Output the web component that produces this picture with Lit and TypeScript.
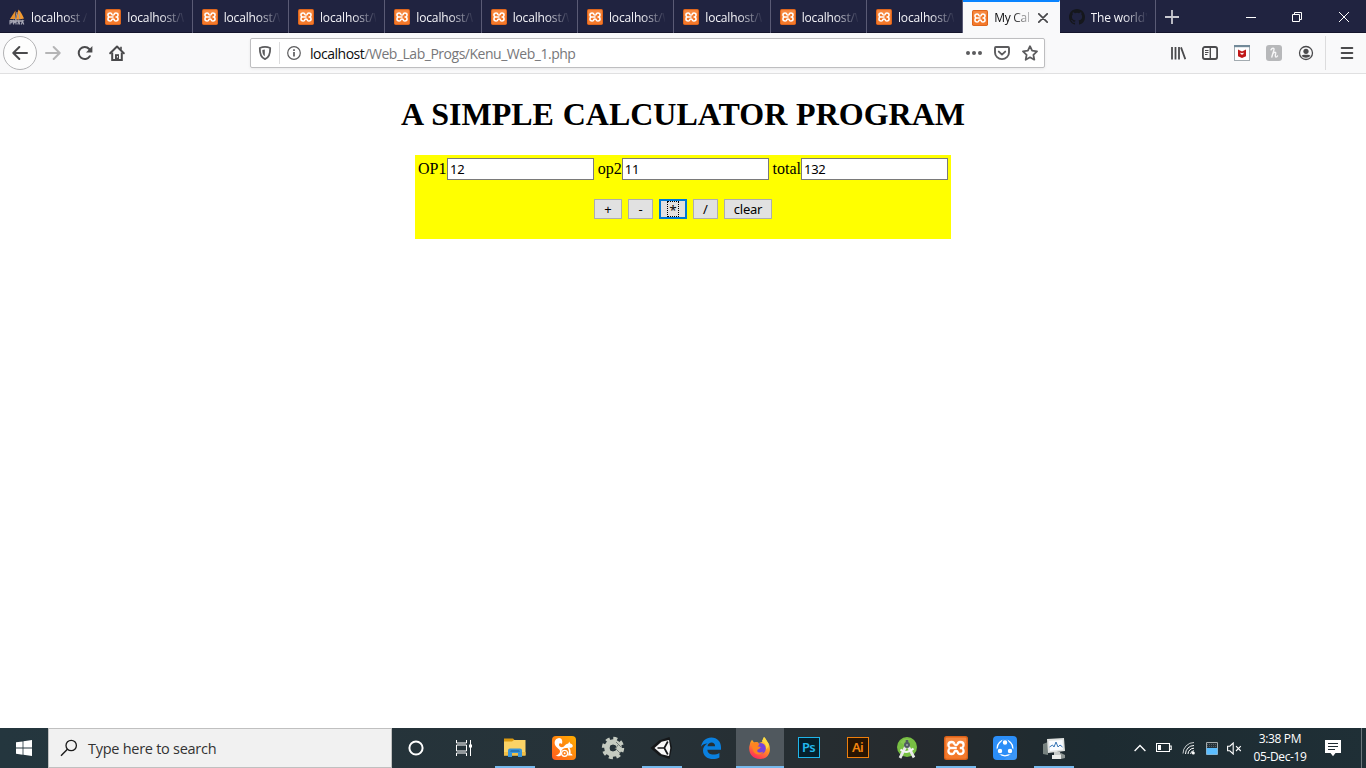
import { LitElement, html, css, svg, nothing } from "lit";
import { customElement, property, state } from "lit/decorators.js";
import { classMap } from "lit/directives/class-map.js";

const xampp = (s: number) => html`<svg width=${s} height=${s} viewBox="0 0 24 24">
  <rect width="24" height="24" rx="2.5" fill="#d9611a"/><rect x="1.2" y="1.2" width="21.6" height="21.6" rx="1.8" fill="#f4792b"/>
  <path d="M2 2h20v5C15 9 8 8 2 11z" fill="#f99a58" opacity=".5"/>
  <path d="M6.200 12H12.800M17.800 12H15.800M7.800 6Q4.400 6 4.400 9Q4.400 11 6.200 12Q4.400 13 4.400 15Q4.400 18 7.800 18Q9.800 18 10.200 16.200Q10.500 15 12 15Q13.500 15 13.800 16.200Q14.200 18 16.200 18Q19.600 18 19.600 15Q19.600 13 17.800 12Q19.600 11 19.600 9Q19.600 6 16.200 6Q14.200 6 13.800 7.800Q13.500 9 12 9Q10.500 9 10.200 7.800Q9.800 6 7.800 6z" fill="none" stroke="#fff" stroke-width="2.300" stroke-linejoin="round"/>
</svg>`;

const ic = (w: number, h: number, body: unknown) =>
  html`<svg width=${w} height=${h} viewBox="0 0 ${w} ${h}" fill="none">${body}</svg>`;

const icons = {
  pma: ic(16, 16, svg`<path d="M1 10L6.5 1.5L6.2 10z" fill="#e8922d"/><path d="M6.8 10.5L9.5 0.5C12 3 14 7 15 9.5L10 10.5z" fill="#f39a30"/><path d="M8 3L6.3 11M10 5l1 5" stroke="#9c9baa"/><path d="M.5 11h15l-1.5 2H2z" fill="#8d8d9b"/><path d="M1 15.5v-3.7h2v2H1M4.6 15.5v-3.7l1.2 1.7L7 11.8v3.7M8.8 15.5l1-3.5 1 3.5M12.4 15.5l1-3.5 1.4 3.5" stroke="#a9a9b7" stroke-width="1.1"/>`),
  github: ic(16, 16, svg`<path fill="#15171c" d="M8 0C3.58 0 0 3.58 0 8c0 3.54 2.29 6.53 5.47 7.59.4.07.55-.17.55-.38v-1.49c-2.01.37-2.53-.49-2.69-.94-.09-.23-.48-.94-.82-1.13-.28-.15-.68-.52-.01-.53.63-.01 1.08.58 1.23.82.72 1.21 1.87.87 2.33.66.07-.52.28-.87.51-1.07-1.78-.2-3.64-.89-3.64-3.95 0-.87.31-1.59.82-2.15-.08-.2-.36-1.02.08-2.12 0 0 .67-.21 2.2.82a7.4 7.4 0 0 1 4 0c1.53-1.04 2.2-.82 2.2-.82.44 1.1.16 1.92.08 2.12.51.56.82 1.27.82 2.15 0 3.07-1.87 3.75-3.65 3.95.29.25.54.73.54 1.48v2.2c0 .21.15.46.55.38A8 8 0 0 0 16 8c0-4.42-3.58-8-8-8z"/>`),
  back: ic(16, 16, svg`<path d="M15 8H1.8M7.3 2L1.3 8l6 6" stroke="#4a4a4c" stroke-width="2" stroke-linecap="round" stroke-linejoin="round"/>`),
  forward: ic(16, 16, svg`<path d="M1 8h13.2M8.7 2l6 6-6 6" stroke="#b5b5b6" stroke-width="2" stroke-linecap="round" stroke-linejoin="round"/>`),
  reload: ic(16, 16, svg`<path d="M12.8 11.2A6 6 0 1 1 12.2 4" stroke="#4a4a4c" stroke-width="2" stroke-linecap="round"/><path d="M15.4 1v6.5H9z" fill="#4a4a4c"/>`),
  home: ic(16, 16, svg`<path d="M1.2 8.2L8 1.5l6.8 6.7" stroke="#4a4a4c" stroke-width="2" stroke-linecap="round" stroke-linejoin="round"/><path d="M3.2 7.5V14.9h9.6V7.5" stroke="#4a4a4c" stroke-width="2"/><path d="M12 1.8v3" stroke="#4a4a4c" stroke-width="1.6"/><path d="M6 15V9.2h4V15z" fill="#4a4a4c"/><path d="M8.4 11v1.6" stroke="#f9f9fa"/>`),
  shield: ic(16, 16, svg`<path d="M8 1.9c2.2 0 3.8.5 5.2 1.1.1 5-.6 9.4-5.2 11.2C3.400 12.400 2.700 8 2.800 3 4.200 2.400 5.800 1.900 8 1.900z" stroke="#5c5c5e" stroke-width="1.8" stroke-linejoin="round"/><path d="M7.800 4.600v6.700C5.800 10 5.300 7.600 5.300 5z" fill="#5c5c5e"/>`),
  info: ic(16, 16, svg`<circle cx="8" cy="8" r="6.3" stroke="#5c5c5e" stroke-width="1.200"/><path d="M8 7v4.500M8 4.300v1.600" stroke="#5c5c5e" stroke-width="1.700"/>`),
  dots: ic(16, 16, svg`<g fill="#5c5c5e"><circle cx="2" cy="8" r="2"/><circle cx="8" cy="8" r="2"/><circle cx="14" cy="8" r="2"/></g>`),
  pocket: ic(16, 16, svg`<path d="M1.900 2h12.200q.9 0 .9.900V7.500a7 6.600 0 0 1-14 0V2.900Q1 2 1.900 2z" stroke="#5c5c5e" stroke-width="1.900"/><path d="M4.800 6.600L8 9.600l3.200-3" stroke="#5c5c5e" stroke-width="1.900" stroke-linecap="round" stroke-linejoin="round"/>`),
  star: ic(16, 16, svg`<path d="M8 1.200l2.100 4.500 4.900.700-3.600 3.400.9 4.900L8 12.300l-4.300 2.400.9-4.900L1 6.400l4.900-.7z" stroke="#5c5c5e" stroke-width="1.800" stroke-linejoin="round"/>`),
  library: ic(16, 16, svg`<path d="M2 2v12.500M5.500 2v12.500M9 2v12.500M11 2.400L15.300 14.300" stroke="#4a4a4c" stroke-width="1.800"/>`),
  sidebar: ic(16, 16, svg`<rect x=".9" y="2" width="14.200" height="12" rx="2" stroke="#4a4a4c" stroke-width="1.800"/><path d="M8.300 2v12" stroke="#4a4a4c" stroke-width="1.400"/><path d="M3 5.500h3.500M3 7.500h3.500M3 9.500h2.500" stroke="#4a4a4c"/>`),
  mcafee: ic(16, 16, svg`<rect x=".5" y=".5" width="15" height="15" fill="#fff" stroke="#a3abb0"/><path d="M0 0h16v2.200H0z" fill="#728a99"/><path d="M4 4.500L8 6.500l4-2v6.800L8 13l-4-1.700z" fill="#c01818"/><path d="M6.500 7.400L8 8.200l1.500-.8v1.600L8 9.800l-1.500-.8z" fill="#fff"/>`),
  honey: ic(16, 16, svg`<rect width="16" height="16" rx="3" fill="#b7b8ba"/><path d="M5 4.800C6 3 8.300 2.600 8 4.600L5.800 12M6.900 8.600c1.200-1.800 3.100-1.800 2.800-.2-.4 1.600-.7 3.700.3 3.700.6 0 1.200-.5 1.500-1.100" stroke="#f6f6f7" stroke-width="1.400" stroke-linecap="round"/>`),
  account: ic(16, 16, svg`<circle cx="8" cy="8" r="6.500" stroke="#4a4a4c" stroke-width="1.300"/><circle cx="8" cy="6.300" r="2.600" fill="#4a4a4c"/><path d="M3.600 10.800C5 9.300 6.500 9.700 8 9.700s3-.4 4.400 1.100C10.800 13.400 5.200 13.400 3.600 10.800z" fill="#4a4a4c"/>`),
  menu: ic(16, 16, svg`<path d="M2.700 3h10.600M2.700 8h10.600M2.700 13h10.600" stroke="#4a4a4c" stroke-width="2" stroke-linecap="round"/>`),
  plus: ic(14, 14, svg`<path d="M7 0v14M0 7h14" stroke="#c9c9d1" stroke-width="1.800"/>`),
  tabClose: ic(10, 10, svg`<path d="M.8.8l8.400 8.400M9.200.8L.8 9.200" stroke="#47474a" stroke-width="1.700" stroke-linecap="round"/>`),
  min: ic(10, 10, svg`<path d="M0 5.500h10" stroke="#fff"/>`),
  restore: ic(10, 10, svg`<path d="M.5 2.500h7v7h-7zM2.500 2.500v-2h7v7h-2" stroke="#fff"/>`),
  close: ic(10, 10, svg`<path d="M0 0l10 10M10 0L0 10" stroke="#fff"/>`),
  windows: ic(16, 16, svg`<path fill="#fff" d="M0 2.300L6.600 1.400v6.200H0zM7.400 1.300L16 .1v7.500H7.400zM0 8.400h6.600v6.300L0 13.800zM7.400 8.400H16V16l-8.600-1.200z"/>`),
  search: ic(18, 18, svg`<circle cx="11.200" cy="6.500" r="5.200" stroke="#1a1a1a" stroke-width="1.300"/><path d="M7.400 10.300L1 16.700" stroke="#1a1a1a" stroke-width="1.400"/>`),
  cortana: ic(18, 18, svg`<circle cx="9" cy="9" r="6.600" stroke="#fff" stroke-width="2"/>`),
  taskview: ic(18, 18, svg`<path d="M1.500 1v3h10V1M1.500 17v-3h10v3M1.500 6h10v6h-10zM15.500 1v16" stroke="#fff"/><path d="M14 5.500h3v3h-3z" fill="#fff"/>`),
  explorer: ic(24, 24, svg`<path d="M1 2.500h9l1.500 1.500H22v4H1z" fill="#dc9a10"/><path d="M1 5.500h8l2-1.500h11.500v15.500H1z" fill="#fbd366"/><path d="M1 16h21.500v3.500H1z" fill="#f3bf45"/><path d="M5 21v-6.500q0-2 2-2h10q2 0 2 2V21h-4v-4H9v4z" fill="#3a94d8"/><path d="M8 14h8l1 2H7z" fill="#2776b8"/>`),
  uc: ic(24, 24, svg`<defs><linearGradient id="u" x1="0" y1="1" x2="1" y2="0"><stop stop-color="#ff5a1f"/><stop offset="1" stop-color="#ffb000"/></linearGradient></defs><rect width="24" height="24" rx="4" fill="url(#u)"/><path d="M7 2C2.500 2.500 1.500 7.500 4 10.500c2 2.500 4.500 3 4 5.500-.5 2-2.500 3-4.500 3.800 2.300.8 4.700.5 6-.8l-.3-3c.3-2.500 2.500-4 4.800-4l5-.200c2-.5 2.500-2.500.5-3.800l-1.500-.8-.7-1.700-1 2c-2.500.300-3.300 2-4.700 3.200C9.500 12 7 10.500 7 8.700c0-1.500 1.800-1.800 3-.7C10.800 5 10 2 7 2z" fill="#fff"/><path d="M15.500 11.500l1.500 3.500-1 4.500h4.500c0-1.300-1-1.700-2-1.700.5-2 0-4.300-1.200-6z" fill="#fff"/><circle cx="12.600" cy="17.300" r="3" stroke="#fff" stroke-width="1.200"/><circle cx="12.600" cy="17.300" r="1" fill="#fff"/>`),
  gear: ic(24, 24, svg`<circle cx="12" cy="12" r="6" stroke="#c5cbc1" stroke-width="5.600"/><circle cx="12" cy="12" r="9.500" stroke="#c5cbc1" stroke-width="3.400" stroke-dasharray="4 3.460"/><circle cx="12" cy="12" r="3.200" fill="#263239"/><path d="M15 6l5 5M15 13l4 4M17 9l-3 4" stroke="#737b78"/>`),
  unity: ic(24, 24, svg`<path d="M.5 12L9 4.500 19.500 1 22 11.500 19.500 23 9 19.500z" fill="#151719"/><path d="M4.500 12L11.500 5.800 19 4l1.300 8-1.300 8-7.500-1.800z" fill="#f8f8f8"/><path d="M7.500 12h7M14.300 12l3.500-6.500M14.300 12l3.500 6.500" stroke="#151719" stroke-width="1.700"/>`),
  edge: ic(24, 24, svg`<path d="M2 10.800C3 5 7 1.500 12.300 1.500c6.200 0 9.700 4.500 9.700 9.700v2.500H8.400c.2 5.600 7.600 5.700 12 3.200v4.500C14.500 25 4 23 4 14.500c0-3 1.700-5.600 4.600-7C5.700 7.600 3.500 8.500 2 10.800zM8.500 10.200h7.600c0-5-6.900-4.800-7.600 0z" fill="#0a80df"/>`),
  firefox: ic(24, 24, svg`<defs><linearGradient id="f" x1=".8" y1="0" x2=".3" y2="1"><stop stop-color="#fff15a"/><stop offset=".45" stop-color="#ff9a20"/><stop offset="1" stop-color="#ff255f"/></linearGradient></defs><path d="M2.500 6L4 3.700l2 2.800 2.800-.6L11 7l3-1L16 1c2 1.500 2.500 3.500 3 5l1.400 1c3.500 7 1 15.900-8.200 16C3.500 23 .5 16.200 1.300 10.500z" fill="url(#f)"/><circle cx="12.200" cy="12.500" r="5.600" fill="#7444dc"/><path d="M3 7.500L8.500 6l3 2.400-2 2c2 .1 3 0 3.200 1.200-1 1.500-3.600 1.800-3.500 3.300.5 2 4 2 6.300.700-2.300 4.600-8 3.400-10 0z" fill="#ff8420"/><path d="M14 5c3 1 5 4.500 4 8.500l2.500-3C21 6 18 4 16 1z" fill="#ffdb40"/>`),
  android: ic(24, 24, svg`<circle cx="12" cy="11" r="10" fill="#78bf43"/><path d="M5 6l4-3h6L10 10z" fill="#91cd5f" opacity=".6"/><path d="M11 10L5 22M13 10L19 21.500" stroke="#e8e9e9" stroke-width="2.800"/><path d="M5.500 13.500q5.500 5.500 13-1" stroke="#f5f5f5" stroke-width="2"/><path d="M12 4v4" stroke="#505c62" stroke-width="2.600"/><circle cx="12" cy="9" r="3" fill="#505c62"/><circle cx="12" cy="9" r="1.100" fill="#9ca4a7"/>`),
  shareit: ic(24, 24, svg`<rect width="24" height="24" rx="4" fill="#2b8ef8"/><path d="M24 10v11q0 3-3 3H11z" fill="#55a5fa" opacity=".4"/><circle cx="12" cy="12" r="7.800" stroke="#fff" stroke-width="1.300"/><g fill="#fff" stroke="#2b8ef8" stroke-width="1.300"><circle cx="12" cy="6.500" r="2.900"/><circle cx="7" cy="15" r="2.900"/><circle cx="17" cy="15" r="2.900"/></g>`),
  monitor: ic(24, 24, svg`<path d="M1 8l5-2v13l-5-1z" fill="#77827f"/><path d="M5 3l17-1 1 13-17 2z" fill="#e0e3e1"/><path d="M7 5l13.500-1 .7 9.500L8 15z" fill="#f8fbff"/><path d="M7.500 11l3-2 1.500 2 2-5 2 5 2-2 2.500 2" stroke="#3675b6"/><path d="M12 16h6l2 5h-8z" fill="#c7cbc9"/><path d="M10 19h9v4h-9z" fill="#eceeec"/><path d="M19 17l4 2v3l-4 1z" fill="#8e9694"/>`),
  chevron: ic(12, 8, svg`<path d="M.6 7L6 1.500 11.400 7" stroke="#fff" stroke-width="1.300"/>`),
  battery: ic(16, 10, svg`<path d="M.5.500h13v8H.5zM14 3h1.200v3.500H14" stroke="#fff" stroke-width="1.100"/><path d="M2 2h3v5H2z" fill="#fff"/>`),
  wifi: ic(14, 14, svg`<g stroke="#fff"><path d="M1 12.500A11 11 0 0 1 12 1.500" opacity=".75"/><path d="M3.500 13A8.500 8.500 0 0 1 12 4.500"/><path d="M6 13A6 6 0 0 1 12 7.200"/><path d="M8.600 13A3.600 3.600 0 0 1 12 9.700"/></g><circle cx="11.300" cy="12" r="1.500" fill="#fff"/>`),
  net: ic(12, 13, svg`<path d="M.5.500h11v12H.5z" fill="#27333a" stroke="#a5abad"/><path d="M1 2.500h10M1 4.500h10" stroke="#555f65" stroke-dasharray="1 1"/><path d="M.5 6h11v6.500H.5z" fill="#5bbdff"/>`),
  volume: ic(15, 13, svg`<path d="M.6 4.200h2.200L6.200 1v11L2.800 8.800H.6z" stroke="#fff" stroke-width="1.100"/><path d="M9 4.200l4.800 4.800M13.800 4.200L9 9" stroke="#fff" stroke-width="1.100"/>`),
  notice: ic(16, 17, svg`<path d="M0 0h16v13h-5.500L8 16.300 5.500 13H0z" fill="#fff"/><path d="M3 3.500h10M3 6.500h10M3 9.500h7" stroke="#1f2b32" stroke-width="1.100"/>`),
};

@customElement("browser-tab")
class BrowserTab extends LitElement {
  @property() label = "";
  @property() icon = "xampp";
  @property({ type: Boolean }) active = false;
  static styles = css`
    :host { display: block; width: 96.33px; height: 33px; flex: none; box-sizing: border-box; }
    .tab { height: 33px; display: flex; align-items: center; box-sizing: border-box; padding: 1px 8px 0 9px; color: #f4f4f8; border-right: 1px solid #5a5b75; gap: 6px; overflow: hidden; font: 12px/16px "Open Sans", sans-serif; }
    .active { background: #f9f9fa; color: #0c0c0d; border-right-color: #f9f9fa; border-top: 2px solid #0a84ff; padding-top: 0; }
    svg { display: block; flex: none; }
    .label { flex: 1; min-width: 0; overflow: hidden; white-space: nowrap; letter-spacing: -0.15px; mask-image: linear-gradient(to right, #000 58%, transparent 102%); padding-top: 2px; }
    .active .label { padding-top: 1px; letter-spacing: -0.3px; mask-image: linear-gradient(to right, #000 45%, transparent 110%); }
    .close { padding-right: 3px; }
  `;
  render() {
    return html`<div class=${classMap({ tab: true, active: this.active })}>
      ${this.icon === "pma" ? icons.pma : this.icon === "github" ? icons.github : xampp(16)}
      <span class="label">${this.label}</span>
      ${this.active ? html`<span class="close">${icons.tabClose}</span>` : nothing}
    </div>`;
  }
}

@customElement("calc-page")
class CalcPage extends LitElement {
  @state() a = "12";
  @state() b = "11";
  @state() total = "132";
  static styles = css`
    :host { display: flex; flex-direction: column; align-items: center; flex: 1; background: #fff; color: #000; font: 16px/18px "Liberation Serif", serif; }
    h1 { margin: 22px 0 22px; font-size: 32px; line-height: 37px; white-space: nowrap; word-spacing: 0.8px; }
    .form { width: 536px; height: 84px; box-sizing: border-box; background: #ff0; padding: 3px; }
    .fields { display: flex; align-items: center; justify-content: space-between; }
    label { display: flex; align-items: center; white-space: nowrap; }
    label:first-child { width: 176px; justify-content: space-between; }
    input { box-sizing: border-box; width: 147px; height: 22px; margin: 0; padding: 2px; border: 1px solid #7a7a7a; border-radius: 0; background: #fff; font: 13px/16px "Noto Sans", sans-serif; letter-spacing: -0.3px; color: #000; }
    .keys { display: flex; justify-content: center; gap: 6px; padding-top: 19px; }
    button { height: 20px; width: 25px; box-sizing: border-box; margin: 0; padding: 0; border: 1px solid #adadad; border-radius: 0; background: #e1e1e1; color: #000; font: 13px/17px "Noto Sans", sans-serif; display: flex; align-items: center; justify-content: center; }
    .wide { width: 28px; }
    .clear { width: 48px; letter-spacing: -0.25px; }
    .focus { width: 28px; border: 2px solid #0078d7; }
    .ring { width: 10px; height: 14px; line-height: 16px; border: 1px dotted #000; }
  `;
  calc(op: string) {
    const x = +this.a, y = +this.b;
    this.total = String(op === "+" ? x + y : op === "-" ? x - y : op === "*" ? x * y : x / y);
  }
  clear() { this.a = this.b = this.total = ""; }
  render() {
    return html`<h1>A SIMPLE CALCULATOR PROGRAM</h1>
      <div class="form">
        <div class="fields">
          <label>OP1<input .value=${this.a} @input=${(e: any) => (this.a = e.target.value)}></label>
          <label>op2<input .value=${this.b} @input=${(e: any) => (this.b = e.target.value)}></label>
          <label>total<input .value=${this.total}></label>
        </div>
        <div class="keys">
          <button class="wide" @click=${() => this.calc("+")}>+</button>
          <button @click=${() => this.calc("-")}>-</button>
          <button class="focus" @click=${() => this.calc("*")}><span class="ring">*</span></button>
          <button @click=${() => this.calc("/")}>/</button>
          <button class="clear" @click=${this.clear}>clear</button>
        </div>
      </div>`;
  }
}

@customElement("task-bar")
class TaskBar extends LitElement {
  static styles = css`
    :host { display: flex; height: 40px; flex: none; background: linear-gradient(90deg, #24363e, #263238 45%, #262b2e 67%, #1d2b31 80%, #1f2f36); color: #fff; font: 12px/18px "Open Sans", sans-serif; }
    svg { display: block; flex: none; }
    .cell { width: 48px; flex: none; display: flex; align-items: center; justify-content: center; }
    .search { width: 344px; flex: none; box-sizing: border-box; background: #f1f1f1; border: 1px solid #c0c0c0; display: flex; align-items: center; gap: 10px; padding-left: 11px; color: #333; font: 14.5px/20px "Open Sans", sans-serif; letter-spacing: -0.27px; white-space: nowrap; }
    .search span { padding-top: 1px; }
    .apps { display: flex; gap: 1px; padding-left: 2.500px; }
    .app { width: 48px; height: 40px; display: flex; flex-direction: column; align-items: center; }
    .app::after { content: ""; height: 2px; width: 40px; flex: none; background: transparent; }
    .open::after { background: #76b9ed; }
    .current { background: #50585e; }
    .current::after { width: 48px; }
    .pic { flex: 1; display: flex; align-items: center; padding-top: 2px; }
    .adobe { width: 22px; height: 21px; box-sizing: border-box; border: 1.500px solid #1fb5ea; background: #05202c; color: #22b8ec; display: flex; align-items: center; justify-content: center; font: 600 13px/16px "Noto Sans", sans-serif; letter-spacing: -0.6px; margin-top: -2px; }
    .ai { border-color: #ef7f0c; background: #281503; color: #f3860e; }
    .tray { flex: 1; display: grid; grid-template-columns: 24px 25px 24px 22px 24px 67px 39px 1fr; justify-items: center; align-items: center; padding-left: 50px; }
    .clock { display: flex; flex-direction: column; align-items: center; letter-spacing: -0.36px; white-space: nowrap; padding-bottom: 1px; }
    .desk { justify-self: end; height: 40px; width: 4px; border-left: 1px solid #6c777c; }
  `;
  render() {
    const app = (pic: unknown, open = false, current = false) =>
      html`<div class=${classMap({ app: true, open, current })}><div class="pic">${pic}</div></div>`;
    return html`
      <div class="cell">${icons.windows}</div>
      <div class="search">${icons.search}<span>Type here to search</span></div>
      <div class="cell">${icons.cortana}</div>
      <div class="cell">${icons.taskview}</div>
      <div class="apps">
        ${app(icons.explorer, true)}${app(icons.uc)}${app(icons.gear)}${app(icons.unity, true)}${app(icons.edge)}
        ${app(icons.firefox, true, true)}${app(html`<span class="adobe">Ps</span>`)}${app(html`<span class="adobe ai">Ai</span>`)}
        ${app(icons.android)}${app(xampp(24), true)}${app(icons.shareit)}${app(icons.monitor, true)}
      </div>
      <div class="tray">
        ${icons.chevron}${icons.battery}${icons.wifi}${icons.net}${icons.volume}
        <div class="clock"><span>3:38 PM</span><span>05-Dec-19</span></div>
        ${icons.notice}<span class="desk"></span>
      </div>`;
  }
}

@customElement("app-root")
class AppRoot extends LitElement {
  static styles = css`
    :host { display: flex; flex-direction: column; width: 1366px; height: 768px; overflow: hidden; font-family: "Open Sans", sans-serif; }
    svg { display: block; flex: none; }
    .tabs { display: flex; height: 33px; flex: none; background: #202340; box-shadow: inset 0 -1px #14152c; }
    .new { width: 33px; display: flex; align-items: center; justify-content: center; }
    .wins { margin-left: auto; display: flex; align-items: center; gap: 36.500px; padding-right: 17.500px; }
    .bar { height: 41px; flex: none; box-sizing: border-box; background: #f9f9fa; border-bottom: 1px solid #e0e0e1; display: flex; align-items: center; padding-left: 3px; }
    .nav { display: flex; align-items: center; gap: 16px; width: 247px; }
    .circle { width: 34px; height: 34px; box-sizing: border-box; border: 1px solid #b2b2b4; border-radius: 50%; background: #fdfdfd; display: flex; align-items: center; justify-content: center; margin-right: -8px; }
    .url { width: 795px; height: 30px; box-sizing: border-box; background: #fff; border: 1px solid #bebec0; border-radius: 2px; box-shadow: 0 1px 3px #0001; display: flex; align-items: center; padding: 0 6px; font-size: 14px; letter-spacing: -0.48px; color: #77777a; white-space: nowrap; }
    .url b { font-weight: 400; color: #0c0c0d; }
    .sep { width: 1px; height: 22px; background: #dcdcdd; margin: 0 6px; }
    .addr { flex: 1; padding: 1px 0 0 8px; }
    .acts { display: flex; gap: 12px; }
    .tools { margin-left: auto; display: flex; gap: 16px; padding-right: 11px; }
    .vline { width: 1px; height: 34px; background: #dcdcdd; margin-right: 13px; }
    .burger { padding-right: 11px; }
  `;
  render() {
    return html`
      <div class="tabs">
        <browser-tab icon="pma" label="localhost /"></browser-tab>
        ${Array.from({ length: 9 }, () => html`<browser-tab label="localhost/W"></browser-tab>`)}
        <browser-tab active label="My Cal"></browser-tab>
        <browser-tab icon="github" label="The world'"></browser-tab>
        <div class="new">${icons.plus}</div>
        <div class="wins">${icons.min}${icons.restore}${icons.close}</div>
      </div>
      <div class="bar">
        <div class="nav"><span class="circle">${icons.back}</span>${icons.forward}${icons.reload}${icons.home}</div>
        <div class="url">${icons.shield}<span class="sep"></span>${icons.info}
          <span class="addr"><b>localhost</b>/Web_Lab_Progs/Kenu_Web_1.php</span>
          <span class="acts">${icons.dots}${icons.pocket}${icons.star}</span></div>
        <div class="tools">${icons.library}${icons.sidebar}${icons.mcafee}${icons.honey}${icons.account}</div>
        <span class="vline"></span>
        <div class="burger">${icons.menu}</div>
      </div>
      <calc-page></calc-page>
      <task-bar></task-bar>`;
  }
}
